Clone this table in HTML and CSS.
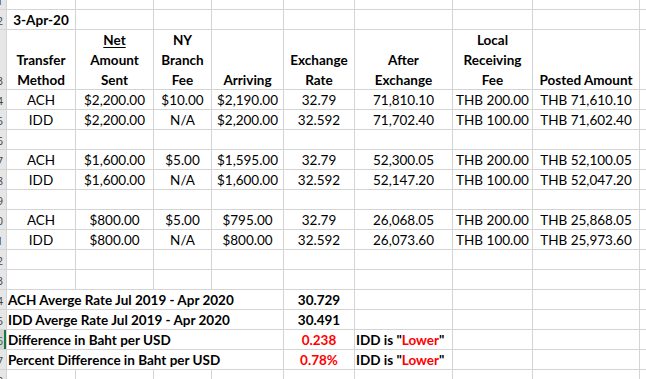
FILE: index.html
```html
<!DOCTYPE html>
<html>
<head>
<meta charset="utf-8">
<link rel="stylesheet" href="styles.css">
</head>
<body>
<div class="sheet">
  <!-- row 1 -->
  <div class="rh r1"><span>1</span></div>
  <div class="c r1"></div><div class="c r1"></div><div class="c r1"></div><div class="c r1"></div><div class="c r1"></div><div class="c r1"></div><div class="c r1"></div><div class="c r1"></div><div class="c r1"></div>
  <!-- row 2 -->
  <div class="rh"><span>2</span></div>
  <div class="c b ctr">3-Apr-20</div><div class="c"></div><div class="c"></div><div class="c"></div><div class="c"></div><div class="c"></div><div class="c"></div><div class="c"></div><div class="c"></div>
  <!-- row 3 -->
  <div class="rh r3"><span>3</span></div>
  <div class="c hd"><div>Transfer<br>Method</div></div>
  <div class="c hd"><div><u>Net</u><br>Amount<br>Sent</div></div>
  <div class="c hd"><div>NY<br>Branch<br>Fee</div></div>
  <div class="c hd"><div>Arriving</div></div>
  <div class="c hd"><div>Exchange<br>Rate</div></div>
  <div class="c hd"><div>After<br>Exchange</div></div>
  <div class="c hd"><div>Local<br>Receiving<br>Fee</div></div>
  <div class="c hd"><div>Posted Amount</div></div>
  <div class="c"></div>
  <!-- row 4 -->
  <div class="rh"><span>4</span></div>
  <div class="c ctr">ACH</div><div class="c ctr">$2,200.00</div><div class="c ctr">$10.00</div><div class="c ctr">$2,190.00</div><div class="c ctr">32.79</div><div class="c ctr">71,810.10</div><div class="c ctr">THB 200.00</div><div class="c ctr">THB 71,610.10</div><div class="c"></div>
  <!-- row 5 -->
  <div class="rh"><span>5</span></div>
  <div class="c ctr">IDD</div><div class="c ctr">$2,200.00</div><div class="c ctr">N/A</div><div class="c ctr">$2,200.00</div><div class="c ctr">32.592</div><div class="c ctr">71,702.40</div><div class="c ctr">THB 100.00</div><div class="c ctr">THB 71,602.40</div><div class="c"></div>
  <!-- row 6 -->
  <div class="rh"><span>6</span></div>
  <div class="c"></div><div class="c"></div><div class="c"></div><div class="c"></div><div class="c"></div><div class="c"></div><div class="c"></div><div class="c"></div><div class="c"></div>
  <!-- row 7 -->
  <div class="rh"><span>7</span></div>
  <div class="c ctr">ACH</div><div class="c ctr">$1,600.00</div><div class="c ctr">$5.00</div><div class="c ctr">$1,595.00</div><div class="c ctr">32.79</div><div class="c ctr">52,300.05</div><div class="c ctr">THB 200.00</div><div class="c ctr">THB 52,100.05</div><div class="c"></div>
  <!-- row 8 -->
  <div class="rh"><span>8</span></div>
  <div class="c ctr">IDD</div><div class="c ctr">$1,600.00</div><div class="c ctr">N/A</div><div class="c ctr">$1,600.00</div><div class="c ctr">32.592</div><div class="c ctr">52,147.20</div><div class="c ctr">THB 100.00</div><div class="c ctr">THB 52,047.20</div><div class="c"></div>
  <!-- row 9 -->
  <div class="rh"><span>9</span></div>
  <div class="c"></div><div class="c"></div><div class="c"></div><div class="c"></div><div class="c"></div><div class="c"></div><div class="c"></div><div class="c"></div><div class="c"></div>
  <!-- row 10 -->
  <div class="rh"><span>10</span></div>
  <div class="c ctr">ACH</div><div class="c ctr">$800.00</div><div class="c ctr">$5.00</div><div class="c ctr">$795.00</div><div class="c ctr">32.79</div><div class="c ctr">26,068.05</div><div class="c ctr">THB 200.00</div><div class="c ctr">THB 25,868.05</div><div class="c"></div>
  <!-- row 11 -->
  <div class="rh"><span>11</span></div>
  <div class="c ctr">IDD</div><div class="c ctr">$800.00</div><div class="c ctr">N/A</div><div class="c ctr">$800.00</div><div class="c ctr">32.592</div><div class="c ctr">26,073.60</div><div class="c ctr">THB 100.00</div><div class="c ctr">THB 25,973.60</div><div class="c"></div>
  <!-- row 12 -->
  <div class="rh"><span>12</span></div>
  <div class="c"></div><div class="c"></div><div class="c"></div><div class="c"></div><div class="c"></div><div class="c"></div><div class="c"></div><div class="c"></div><div class="c"></div>
  <!-- row 13 -->
  <div class="rh"><span>13</span></div>
  <div class="c"></div><div class="c"></div><div class="c"></div><div class="c"></div><div class="c"></div><div class="c"></div><div class="c"></div><div class="c"></div><div class="c"></div>
  <!-- row 14 -->
  <div class="rh"><span>14</span></div>
  <div class="c b lbl span4">ACH Averge Rate Jul 2019 - Apr 2020</div><div class="c b ctr">30.729</div><div class="c"></div><div class="c"></div><div class="c"></div><div class="c"></div>
  <!-- row 15 -->
  <div class="rh"><span>15</span></div>
  <div class="c b lbl span4">IDD Averge Rate Jul 2019 - Apr 2020</div><div class="c b ctr">30.491</div><div class="c"></div><div class="c"></div><div class="c"></div><div class="c"></div>
  <!-- row 16 -->
  <div class="rh sel"><span>16</span></div>
  <div class="c b lbl span4">Difference in Baht per USD</div><div class="c b ctr red">0.238</div><div class="c b lbl">IDD is "<span class="red">Lower</span>"</div><div class="c"></div><div class="c"></div><div class="c"></div>
  <!-- row 17 -->
  <div class="rh"><span>17</span></div>
  <div class="c b lbl span4">Percent Difference in Baht per USD</div><div class="c b ctr red">0.78%</div><div class="c b lbl">IDD is "<span class="red">Lower</span>"</div><div class="c"></div><div class="c"></div><div class="c"></div>
  <!-- row 18 -->
  <div class="rh"><span>18</span></div>
  <div class="c"></div><div class="c"></div><div class="c"></div><div class="c"></div><div class="c"></div><div class="c"></div><div class="c"></div><div class="c"></div><div class="c"></div>
</div>
</body>
</html>
```

FILE: styles.css
```css
html, body {
  margin: 0;
  padding: 0;
  background: #ffffff;
  overflow: hidden;
}

.sheet {
  display: grid;
  grid-template-columns: 6px 68px 77px 57px 71px 70px 97px 79px 106px 20px;
  grid-template-rows: 9px 19px 59px repeat(15, 19px);
  gap: 1px;
  background: #d4d4d4;
  width: 660px;
  font-family: Lato, "Open Sans", sans-serif;
  font-size: 13.5px;
  color: #000000;
  line-height: 20px;
}

.c {
  background: #ffffff;
  white-space: nowrap;
  overflow: visible;
  min-width: 0;
}

.r1 {
  overflow: hidden;
}

.ctr {
  text-align: center;
}

.b {
  font-weight: bold;
}

.lbl {
  padding-left: 1px;
}

.span4 {
  grid-column: span 4;
}

.red {
  color: #ff0000;
}

.hd {
  display: flex;
  flex-direction: column;
  justify-content: flex-end;
  text-align: center;
  font-weight: bold;
}

.hd > div {
  margin-bottom: -1px;
}

.hd u {
  text-decoration-thickness: 1px;
  text-underline-offset: 2px;
}

.rh {
  background: #e6e6e6;
  overflow: hidden;
  display: flex;
  justify-content: flex-end;
  align-items: flex-end;
  font-family: "Open Sans", sans-serif;
  font-size: 11px;
  line-height: 17px;
  color: #444444;
  position: relative;
}

.rh span {
  margin-right: 3px;
}

.rh.sel {
  background: #d2d2d2;
  color: #217346;
  box-shadow: inset -2px 0 0 #217346;
}
```
